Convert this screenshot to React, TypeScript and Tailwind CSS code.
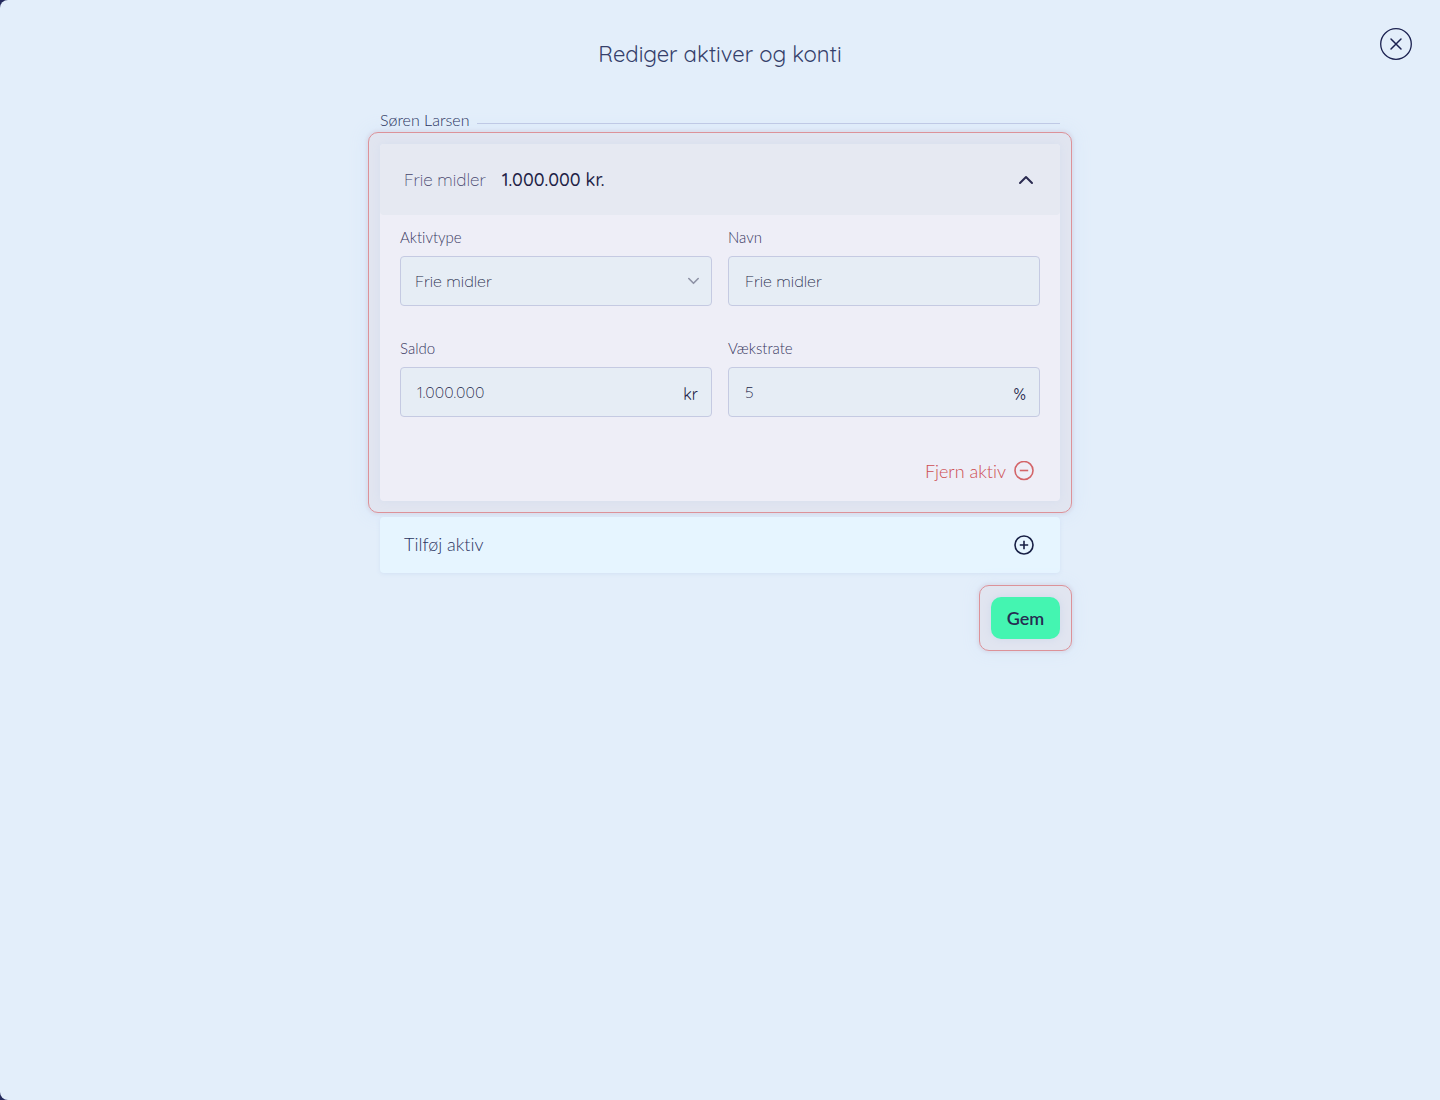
import { useState } from 'react'
import type { ReactNode } from 'react'

interface FieldProps {
  id: string
  label: string
  children: ReactNode
}

function Field({ id, label, children }: FieldProps) {
  return (
    <div>
      <label htmlFor={id} className="block text-[15px] leading-5 font-light text-[#38375f]">
        {label}
      </label>
      <div className="relative mt-[9px]">{children}</div>
    </div>
  )
}

const inputClass =
  "block h-[50px] w-full appearance-none rounded border border-[#c5cae2] bg-[#e6edf5] font-['Quicksand','Lato',sans-serif] text-base font-light text-[#1c1e47] outline-none"

const suffixClass =
  "pointer-events-none absolute inset-y-0 right-3.5 flex items-center pt-1 font-['Quicksand','Lato',sans-serif] text-base text-[#1c1e47]"

export default function App() {
  const [open, setOpen] = useState(true)
  const [type, setType] = useState('Frie midler')
  const [name, setName] = useState('Frie midler')
  const [balance, setBalance] = useState('1.000.000')
  const [rate, setRate] = useState('5')

  return (
    <div className="min-h-screen bg-[#242a5c] font-['Lato',sans-serif] [font-variant-ligatures:none]">
      <div className="min-h-screen rounded-l-lg bg-[#e3eefa]">
        <header className="grid grid-cols-[1fr_auto_1fr] items-start px-7 pt-7">
          <h1 className="col-start-2 pt-2.5 font-['Quicksand','Lato',sans-serif] text-[22px] leading-8 font-normal text-[#353f6b]">
            Rediger aktiver og konti
          </h1>
          <button type="button" aria-label="Luk" className="justify-self-end text-[#1b2150]">
            <svg className="size-8" viewBox="0 0 32 32" fill="none" stroke="currentColor" strokeLinecap="round">
              <circle cx="16" cy="16" r="15.3" strokeWidth="1.3" />
              <path d="M11 11l10 10M21 11L11 21" strokeWidth="1.5" />
            </svg>
          </button>
        </header>

        <main className="mx-auto max-w-[704px] pt-10">
          <div className="flex items-center gap-2 px-3 pb-0.5">
            <h2 className="text-base leading-5 font-light text-[#2b345f]">Søren Larsen</h2>
            <div className="mt-1.5 h-px flex-1 bg-[#bfc9e5]" />
          </div>

          <section className="rounded-[10px] border border-[#dc9299] bg-[#e1e5f0] p-[11px] shadow-[0_0_3px_2px_#d9deed,0_0_16px_4px_#dbe9f9]">
            <div className="rounded bg-[#eeeef7] shadow-[0_0_8px_#d6deee]">
              <button
                type="button"
                aria-expanded={open}
                onClick={() => setOpen(!open)}
                className="flex h-[71px] w-full items-center rounded bg-[#e6e9f2] px-6 pt-px text-left font-['Quicksand','Lato',sans-serif]"
              >
                <span className="text-[17px] font-light text-[#45456c]">Frie midler</span>
                <span className="ml-4 text-lg font-medium text-[#1f1f47]">1.000.000 kr.</span>
                <svg
                  className="ml-auto size-5 text-[#2b2b51]"
                  viewBox="0 0 20 20"
                  fill="none"
                  stroke="currentColor"
                  strokeWidth="2"
                  strokeLinecap="round"
                  strokeLinejoin="round"
                >
                  <path d={open ? 'M4 13l6-6 6 6' : 'M4 7l6 6 6-6'} />
                </svg>
              </button>

              {open && (
                <div className="px-5 pt-3 pb-4">
                  <div className="grid grid-cols-2 gap-x-4 gap-y-8">
                    <Field id="type" label="Aktivtype">
                      <select
                        id="type"
                        value={type}
                        onChange={(e) => setType(e.target.value)}
                        className={`${inputClass} px-3.5`}
                      >
                        <option>Frie midler</option>
                      </select>
                      <svg
                        className="pointer-events-none absolute top-[19px] right-3 size-3"
                        viewBox="0 0 12 12"
                        fill="none"
                        stroke="#8e92a5"
                        strokeWidth="1.6"
                        strokeLinecap="round"
                        strokeLinejoin="round"
                      >
                        <path d="M.8 3.5L5.5 8.3l4.7-4.8" />
                      </svg>
                    </Field>
                    <Field id="name" label="Navn">
                      <input
                        id="name"
                        value={name}
                        onChange={(e) => setName(e.target.value)}
                        className={`${inputClass} px-4`}
                      />
                    </Field>
                    <Field id="balance" label="Saldo">
                      <input
                        id="balance"
                        value={balance}
                        onChange={(e) => setBalance(e.target.value)}
                        className={`${inputClass} px-4`}
                      />
                      <span className={suffixClass}>kr</span>
                    </Field>
                    <Field id="rate" label="Vækstrate">
                      <input
                        id="rate"
                        value={rate}
                        onChange={(e) => setRate(e.target.value)}
                        className={`${inputClass} px-4`}
                      />
                      <span className={suffixClass}>%</span>
                    </Field>
                  </div>
                  <div className="mt-10 flex justify-end pr-1.5">
                    <button
                      type="button"
                      className="flex items-center gap-2 text-lg leading-7 font-light text-[#cd4d52]"
                    >
                      Fjern aktiv
                      <svg className="size-5" viewBox="0 0 20 20" fill="none" stroke="#d36468" strokeWidth="1.6">
                        <circle cx="10" cy="9.5" r="9" />
                        <path d="M5.8 9.5h8.4" />
                      </svg>
                    </button>
                  </div>
                </div>
              )}
            </div>
          </section>

          <div className="px-3 pt-1">
            <button
              type="button"
              className="flex h-14 w-full items-center justify-between rounded bg-[#e6f5ff] pr-[26px] pl-6 text-lg font-light text-[#2b345f] shadow-[0_1px_4px_#d3e1f4]"
            >
              <span className="pb-0.5">Tilføj aktiv</span>
              <svg
                className="size-5 text-[#171f45]"
                viewBox="0 0 20 20"
                fill="none"
                stroke="currentColor"
                strokeWidth="1.6"
              >
                <circle cx="10" cy="10" r="9" />
                <path d="M5.8 10h8.4M10 5.8v8.4" />
              </svg>
            </button>
          </div>

          <div className="mt-3 flex justify-end">
            <div className="rounded-[10px] border border-[#dc9299] bg-[#e1e5f0] p-[11px] shadow-[0_0_3px_2px_#d9deed,0_0_16px_2px_#dbe9f9]">
              <button
                type="button"
                className="block h-[42px] min-w-[69px] rounded-[10px] bg-[#44f5b1] px-[15px] text-lg font-semibold text-[#262c52] shadow-[0_0_8px_#d0d8ea]"
              >
                Gem
              </button>
            </div>
          </div>
        </main>
      </div>
    </div>
  )
}
